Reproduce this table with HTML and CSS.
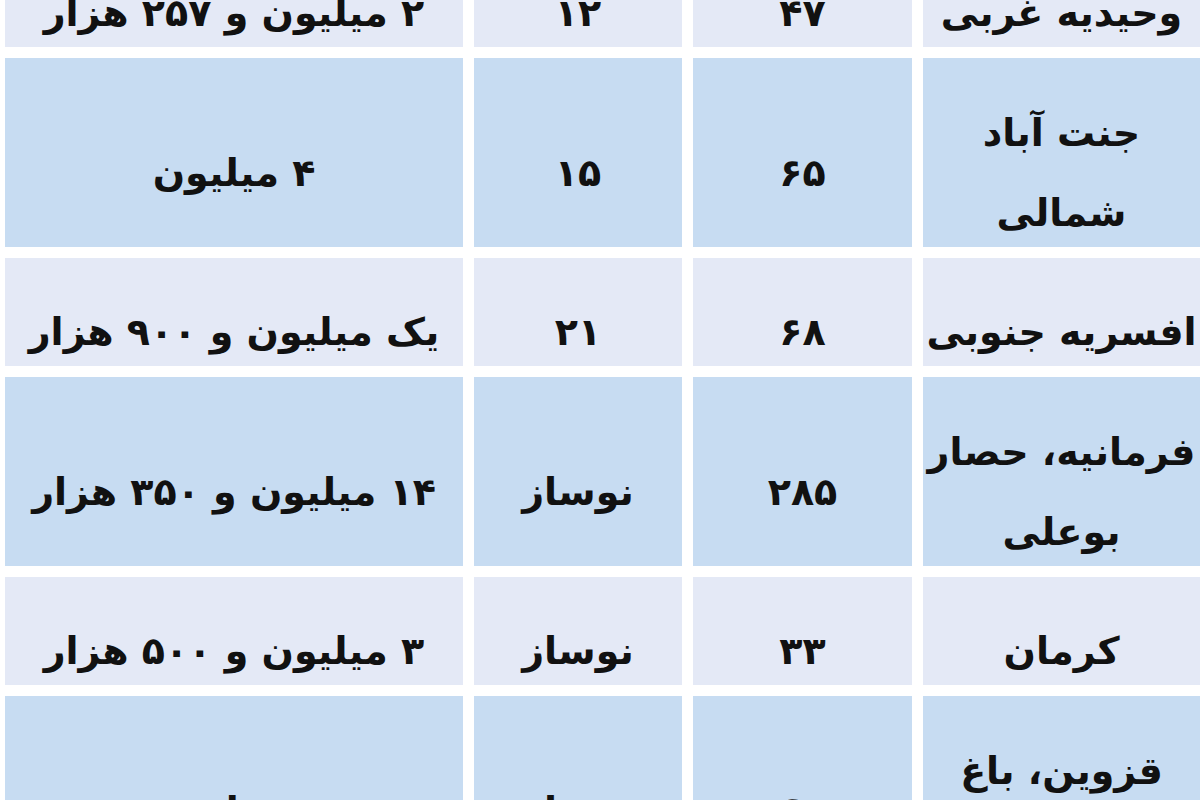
FILE: index.html
```html
<!DOCTYPE html>
<html lang="fa" dir="rtl">
<head>
<meta charset="utf-8">
<title>قیمت آپارتمان</title>
<link rel="stylesheet" href="styles.css">
</head>
<body>
<div class="grid">
  <div class="cell light"><span>وحیدیه غربی</span></div>
  <div class="cell light"><span>۴۷</span></div>
  <div class="cell light"><span>۱۲</span></div>
  <div class="cell light"><span>۲ میلیون و ۲۵۷ هزار</span></div>

  <div class="cell blue"><span>جنت آباد<br>شمالی</span></div>
  <div class="cell blue"><span>۶۵</span></div>
  <div class="cell blue"><span>۱۵</span></div>
  <div class="cell blue"><span>۴ میلیون</span></div>

  <div class="cell light"><span>افسریه جنوبی</span></div>
  <div class="cell light"><span>۶۸</span></div>
  <div class="cell light"><span>۲۱</span></div>
  <div class="cell light"><span>یک میلیون و ۹۰۰ هزار</span></div>

  <div class="cell blue"><span>فرمانیه، حصار<br>بوعلی</span></div>
  <div class="cell blue"><span>۲۸۵</span></div>
  <div class="cell blue"><span>نوساز</span></div>
  <div class="cell blue"><span>۱۴ میلیون و ۳۵۰ هزار</span></div>

  <div class="cell light"><span>کرمان</span></div>
  <div class="cell light"><span>۳۳</span></div>
  <div class="cell light"><span>نوساز</span></div>
  <div class="cell light"><span>۳ میلیون و ۵۰۰ هزار</span></div>

  <div class="cell blue"><span>قزوین، باغ<br>آذری</span></div>
  <div class="cell blue"><span>۶۱</span></div>
  <div class="cell blue"><span>نوساز</span></div>
  <div class="cell blue"><span>۲ میلیون</span></div>
</div>
</body>
</html>
```
FILE: styles.css
```css
html, body {
  margin: 0;
  padding: 0;
  background: #ffffff;
  overflow: hidden;
}

body {
  font-family: "DejaVu Sans", sans-serif;
  font-weight: bold;
  color: #111111;
}

.grid {
  direction: rtl;
  display: grid;
  grid-template-columns: 277px 219px 208px 458px;
  grid-template-rows: 108px 189px 108px 189px 108px 189px;
  column-gap: 11px;
  row-gap: 11px;
  margin-top: -61px;
  margin-left: 4px;
  width: 1196px;
}

.cell {
  display: flex;
  align-items: center;
  justify-content: center;
  text-align: center;
  padding-top: 40px;
  box-sizing: border-box;
  font-size: 38px;
  line-height: 80px;
}

.light {
  background: #e4e9f6;
}

.blue {
  background: #c7dcf2;
}
```
